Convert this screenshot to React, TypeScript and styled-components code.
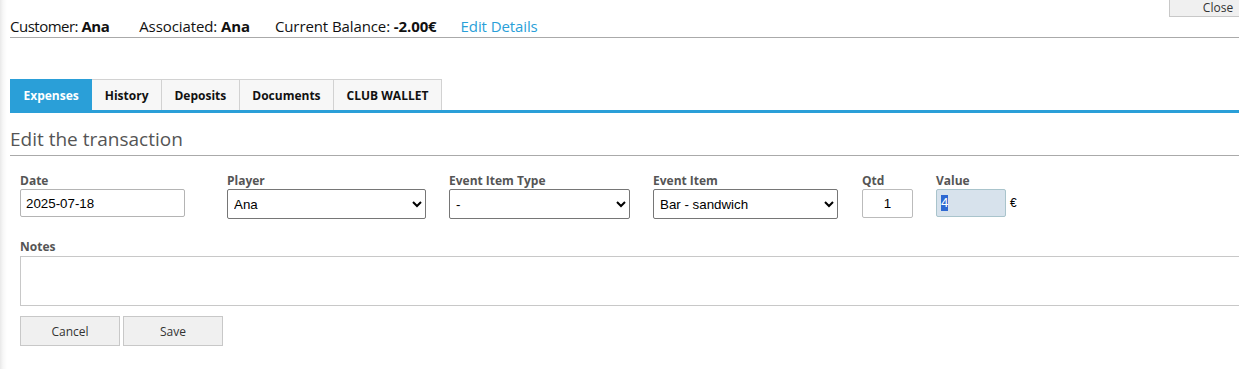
import styled, { createGlobalStyle } from "styled-components";

const GlobalStyle = createGlobalStyle`
  html, body {
    margin: 0;
    padding: 0;
    overflow: hidden;
    background: linear-gradient(to right, #e9e9e9 0, #f7f7f7 3px, #fff 7px);
    font-family: "Open Sans", "Liberation Sans", sans-serif;
    color: #222;
  }
`;

const tabs = ["Expenses", "History", "Deposits", "Documents", "CLUB WALLET"];

function App() {
  return (
    <Page>
      <GlobalStyle />
      <CloseButton>Close</CloseButton>
      <Header>
        <Info $mr={30} $tight>
          Customer: <b>Ana</b>
        </Info>
        <Info $mr={25}>
          Associated: <b>Ana</b>
        </Info>
        <Info $mr={24}>
          Current Balance: <b>-2.00€</b>
        </Info>
        <Link>Edit Details</Link>
      </Header>

      <TabBar>
        {tabs.map((t, i) => (
          <Tab key={t} $active={i === 0}>
            {t}
          </Tab>
        ))}
      </TabBar>

      <Title>Edit the transaction</Title>

      <Form>
        <FieldRow>
          <Field $mr={42}>
            <Label>Date</Label>
            <TextInput $w={165} defaultValue="2025-07-18" />
          </Field>
          <Field $mr={23}>
            <Label>Player</Label>
            <Select $w={199} defaultValue="Ana">
              <option>Ana</option>
            </Select>
          </Field>
          <Field $mr={23}>
            <Label>Event Item Type</Label>
            <Select $w={181} defaultValue="-">
              <option>-</option>
            </Select>
          </Field>
          <Field $mr={24}>
            <Label>Event Item</Label>
            <Select $w={185} defaultValue="Bar - sandwich">
              <option>Bar - sandwich</option>
            </Select>
          </Field>
          <Field $mr={23}>
            <Label>Qtd</Label>
            <QtdInput defaultValue="1" />
          </Field>
          <Field>
            <Label>Value</Label>
            <ValueWrap>
              <ValueBox>
                <Selected>4</Selected>
              </ValueBox>
              <Currency>€</Currency>
            </ValueWrap>
          </Field>
        </FieldRow>

        <NotesLabel>Notes</NotesLabel>
        <Notes />

        <Actions>
          <Button>Cancel</Button>
          <Button>Save</Button>
        </Actions>
      </Form>
    </Page>
  );
}

export default App;

const Page = styled.div`
  position: relative;
  padding-left: 10px;
  min-height: 369px;
  box-sizing: border-box;
`;

const CloseButton = styled.button`
  position: absolute;
  top: -10px;
  left: 1169px;
  width: 98px;
  height: 27px;
  padding: 8px 0 0;
  border: 1px solid #c8c8c8;
  background: #f0f0f0;
  font-family: "Open Sans", sans-serif;
  font-size: 12px;
  color: #333;
  line-height: 14px;
`;

const Header = styled.div`
  display: flex;
  align-items: center;
  padding-top: 16px;
  padding-bottom: 1px;
  height: 20px;
  line-height: 20px;
  font-size: 15px;
  color: #111;
  border-bottom: 1px solid #aaa;
  letter-spacing: -0.1px;

  b {
    font-weight: 700;
  }
`;

const Info = styled.span<{ $mr: number; $tight?: boolean }>`
  margin-right: ${(p) => p.$mr}px;
  white-space: nowrap;
  letter-spacing: ${(p) => (p.$tight ? "-0.5px" : "-0.1px")};
`;

const Link = styled.a`
  color: #2a9fd8;
  cursor: pointer;
`;

const TabBar = styled.div`
  display: flex;
  margin-top: 41px;
  border-bottom: 3px solid #2a9fd8;
`;

const Tab = styled.div<{ $active?: boolean }>`
  height: 31px;
  box-sizing: border-box;
  padding: 0 12.5px;
  display: flex;
  align-items: center;
  font-size: 12px;
  font-weight: 700;
  border: 1px solid ${(p) => (p.$active ? "#2a9fd8" : "#d2d2d2")};
  border-bottom: none;
  border-left: ${(p) => (p.$active ? "1px solid #2a9fd8" : "none")};
  background: ${(p) => (p.$active ? "#2a9fd8" : "#f7f7f7")};
  color: ${(p) => (p.$active ? "#fff" : "#111")};
`;

const Title = styled.h2`
  margin: 13px 0 0;
  padding-bottom: 3px;
  font-size: 19px;
  font-weight: 400;
  line-height: 26px;
  color: #555;
  border-bottom: 1px solid #aaa;
`;

const Form = styled.div`
  padding-left: 10px;
`;

const FieldRow = styled.div`
  display: flex;
  align-items: flex-start;
  margin-top: 18px;
`;

const Field = styled.div<{ $mr?: number }>`
  display: flex;
  flex-direction: column;
  gap: 1px;
  margin-right: ${(p) => p.$mr ?? 0}px;
`;

const Label = styled.label`
  font-size: 12px;
  font-weight: 700;
  line-height: 14px;
  color: #555;
`;

const TextInput = styled.input<{ $w: number }>`
  width: ${(p) => p.$w}px;
  height: 28px;
  box-sizing: border-box;
  padding: 0 5px;
  border: 1px solid #b4b4b4;
  border-radius: 2px;
  font-family: "Liberation Sans", Arial, sans-serif;
  font-size: 13.33px;
  color: #000;
`;

const Select = styled.select<{ $w: number }>`
  width: ${(p) => p.$w}px;
  height: 30px;
  box-sizing: border-box;
  padding: 0 2px;
  border: 1px solid #767676;
  border-radius: 2px;
  background: #fff;
  font-family: "Liberation Sans", Arial, sans-serif;
  font-size: 13.33px;
  color: #000;
`;

const QtdInput = styled.input`
  width: 51px;
  height: 29px;
  box-sizing: border-box;
  border: 1px solid #bbb;
  border-radius: 2px;
  text-align: center;
  font-family: "Liberation Sans", Arial, sans-serif;
  font-size: 13.33px;
  color: #000;
`;

const ValueWrap = styled.div`
  display: flex;
  align-items: center;
  gap: 4px;
`;

const ValueBox = styled.div`
  width: 70px;
  height: 28px;
  box-sizing: border-box;
  padding: 0 4px;
  display: flex;
  align-items: center;
  background: #d7e2ec;
  border: 1px solid #a9c4cc;
  border-radius: 2px;
  font-family: "Liberation Sans", Arial, sans-serif;
  font-size: 13.33px;
`;

const Selected = styled.span`
  background: #2f69d2;
  color: #fff;
  line-height: 16px;
`;

const Currency = styled.span`
  font-family: "Liberation Sans", Arial, sans-serif;
  font-size: 12px;
  color: #000;
`;

const NotesLabel = styled(Label)`
  display: block;
  margin-top: 21px;
`;

const Notes = styled.textarea`
  display: block;
  margin-top: 2px;
  width: 1300px;
  height: 50px;
  box-sizing: border-box;
  border: 1px solid #c8c8c8;
  resize: none;
`;

const Actions = styled.div`
  display: flex;
  gap: 3px;
  margin-top: 10px;
`;

const Button = styled.button`
  width: 100px;
  height: 30px;
  border: 1px solid #c8c8c8;
  background: #f0f0f0;
  font-family: "Open Sans", sans-serif;
  font-size: 12px;
  color: #333;
`;
